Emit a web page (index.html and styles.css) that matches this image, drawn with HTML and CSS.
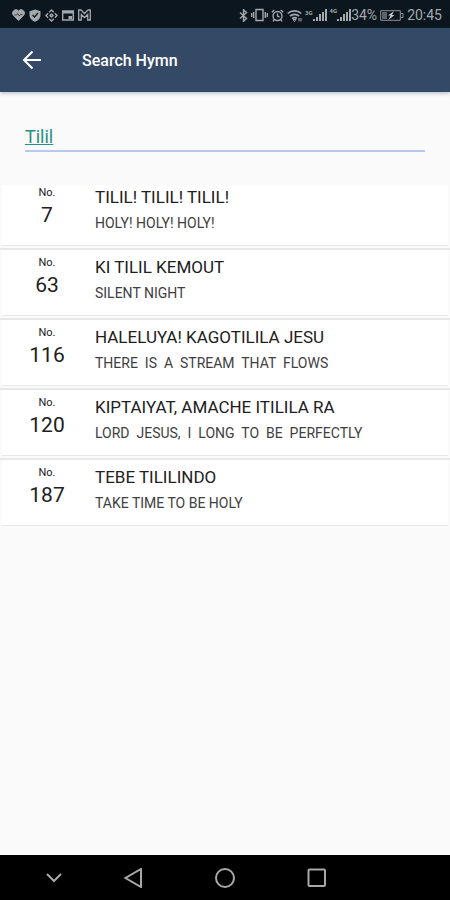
FILE: index.html
```html
<!DOCTYPE html>
<html lang="en">
  <head>
    <meta charset="UTF-8" />
    <meta name="viewport" content="width=device-width, initial-scale=1.0" />
    <title>Search Hymn</title>
    <link rel="stylesheet" href="styles.css">
  </head>
  <body>
    <!-- Status bar -->
    <div class="statusBar">
      <div class="statusGroup notifications">
        <svg width="13" height="12" viewBox="0 0 13 12">
          <path d="M6.500 11.500 1.300 6.200A3.200 3.200 0 0 1 6.500 2a3.200 3.200 0 0 1 5.200 4.200z" fill="#a3a9ad" stroke="#a3a9ad" />
          <path d="M2.500 6h2l1.200-1.500 1.600 2.500L8.500 5.500h2" fill="none" stroke="#3c464d" />
        </svg>
        <svg width="12" height="13" viewBox="0 0 12 13">
          <path d="M6 .5 11.500 2.200V6c0 3.500-2.500 5.500-5.500 6.700C3 11.500.5 9.500.5 6V2.200z" fill="#a3a9ad" />
          <path d="m3.500 6 2 2 3.500-4" fill="none" stroke="#0b161e" stroke-width="1.200" />
        </svg>
        <svg width="13" height="13" viewBox="0 0 13 13" fill="none" stroke="#a3a9ad" stroke-width="1.400">
          <path d="M4.200 3.200 6.500 1l2.300 2.200M9.800 4.200 12 6.500 9.800 8.800M8.800 9.800 6.500 12 4.200 9.800M3.200 8.800 1 6.500l2.200-2.300" />
          <path d="m6.500 5 1.500 1.500L6.500 8 5 6.500z" />
        </svg>
        <svg width="12" height="11" viewBox="0 0 12 11">
          <path d="M.7 1h10.600v9H.7z" fill="none" stroke="#a3a9ad" stroke-width="1.400" />
          <path d="M1 1h10v2.500H1zM6.500 6H10v3H6.500z" fill="#a3a9ad" />
        </svg>
        <svg width="13" height="12" viewBox="0 0 13 12" fill="none" stroke="#a3a9ad" stroke-width="1.300">
          <path d="M.7 1v10h2.600V5.500l3.200 3 3.200-3V11h2.600V1H10L6.500 4.500 3 1z" />
        </svg>
      </div>
      <div class="statusGroup system">
        <svg width="9" height="13" viewBox="0 0 9 13" fill="none" stroke="#a3a9ad" stroke-width="1.400">
          <path d="m1 3.500 6.500 6-3 2.800V.8l3 2.700-6.500 6" />
        </svg>
        <svg width="17" height="14" viewBox="0 0 17 14" fill="none" stroke="#a3a9ad" stroke-width="1.400">
          <path d="M5 1.500h7v11H5zM2.700 4v6M14.300 4v6M.7 5v4M16.300 5v4" />
        </svg>
        <svg width="13" height="13" viewBox="0 0 13 13" fill="none" stroke="#a3a9ad" stroke-width="1.400">
          <circle cx="6.500" cy="7" r="4.500" />
          <path d="M6.500 4.500V7l2 1.200M.8 3.200 3.300 1M12.200 3.200 9.700 1M3.300 10.500 2 12.300M9.700 10.500l1.300 1.800" />
        </svg>
        <svg width="15" height="13" viewBox="0 0 15 13" fill="none" stroke="#a3a9ad" stroke-width="1.700">
          <path d="M.7 4.500a10 10 0 0 1 13.600 0M3 7.200a6.500 6.500 0 0 1 9 0M5.200 9.600a3.200 3.200 0 0 1 4.600 0" />
          <path d="m7.500 12.500-1.500-2h3zM12 9v3.500M14 9v3.500" stroke-width="1" />
        </svg>
        <span class="signal">
          <span class="network">3G</span>
          <svg width="14" height="12" viewBox="0 0 14 12" fill="#a3a9ad">
            <path d="M0 10h2v2H0zM3 8h2v4H3zM6 5h2v7H6zM9 3h2v9H9zM12 0h2v12h-2z" />
          </svg>
        </span>
        <span class="signal">
          <span class="network">4G</span>
          <svg width="14" height="12" viewBox="0 0 14 12" fill="#a3a9ad">
            <path d="M0 10h2v2H0zM3 8h2v4H3zM6 5h2v7H6zM9 3h2v9H9zM12 0h2v12h-2z" />
          </svg>
          <span>34%</span>
        </span>
        <svg width="24" height="11" viewBox="0 0 24 11">
          <path d="M.7.7h19.600v9.600H.7zM20.500 3.500h2.500v4h-2.500" fill="none" stroke="#8b9297" stroke-width="1" />
          <path d="M2 2h5v7H2z" fill="#59636a" />
          <path d="m14 1-6 4.500h2.500L8.500 10l6-5H12z" fill="#c5c9cb" />
        </svg>
        <span>20:45</span>
      </div>
    </div>

    <!-- App bar -->
    <header class="appBar">
      <button class="backButton" aria-label="Back">
        <svg width="20" height="20" viewBox="0 0 20 20" fill="none" stroke="#fff" stroke-width="2">
          <path d="M19 10H2M10.500 1.500 2 10l8.500 8.500" />
        </svg>
      </button>
      <h1 class="appTitle">Search Hymn</h1>
    </header>

    <main class="content">
      <input class="searchInput" type="text" value="Tilil" aria-label="Search hymn" spellcheck="false" />

      <!-- Results -->
      <div class="results">
        <ul class="hymnList">
          <li class="hymn">
            <div class="card">
              <div class="hymnNumber"><span class="label">No.</span><span class="number">7</span></div>
              <div class="hymnInfo">
                <div class="hymnTitle">TILIL! TILIL! TILIL!</div>
                <div class="hymnSubtitle">HOLY! HOLY! HOLY!</div>
              </div>
            </div>
          </li>
          <li class="hymn">
            <div class="card">
              <div class="hymnNumber"><span class="label">No.</span><span class="number">63</span></div>
              <div class="hymnInfo">
                <div class="hymnTitle">KI TILIL KEMOUT</div>
                <div class="hymnSubtitle">SILENT NIGHT</div>
              </div>
            </div>
          </li>
          <li class="hymn">
            <div class="card">
              <div class="hymnNumber"><span class="label">No.</span><span class="number">116</span></div>
              <div class="hymnInfo">
                <div class="hymnTitle">HALELUYA! KAGOTILILA JESU</div>
                <div class="hymnSubtitle">THERE  IS  A  STREAM  THAT  FLOWS</div>
              </div>
            </div>
          </li>
          <li class="hymn">
            <div class="card">
              <div class="hymnNumber"><span class="label">No.</span><span class="number">120</span></div>
              <div class="hymnInfo">
                <div class="hymnTitle">KIPTAIYAT, AMACHE ITILILA RA</div>
                <div class="hymnSubtitle">LORD  JESUS,  I  LONG  TO  BE  PERFECTLY</div>
              </div>
            </div>
          </li>
          <li class="hymn">
            <div class="card">
              <div class="hymnNumber"><span class="label">No.</span><span class="number">187</span></div>
              <div class="hymnInfo">
                <div class="hymnTitle">TEBE TILILINDO</div>
                <div class="hymnSubtitle">TAKE TIME TO BE HOLY</div>
              </div>
            </div>
          </li>
        </ul>
      </div>
    </main>

    <!-- Navigation bar -->
    <nav class="navBar">
      <button class="navButton hideButton" aria-label="Hide navigation">
        <svg width="16" height="10" viewBox="0 0 16 10"><path d="m1 1 7 7 7-7" /></svg>
      </button>
      <button class="navButton" aria-label="Back">
        <svg width="20" height="20" viewBox="0 0 20 20"><path d="M18 1v18L2.500 10z" /></svg>
      </button>
      <button class="navButton" aria-label="Home">
        <svg width="20" height="20" viewBox="0 0 20 20"><circle cx="10" cy="10" r="9" /></svg>
      </button>
      <button class="navButton" aria-label="Recent apps">
        <svg width="20" height="20" viewBox="0 0 20 20"><rect x="1.500" y="1.500" width="16.500" height="16.500" rx="1" /></svg>
      </button>
    </nav>
  </body>
</html>
```

FILE: styles.css
```css
* {
  box-sizing: border-box;
}

body {
  margin: 0;
  min-height: 100vh;
  display: flex;
  flex-direction: column;
  background: #fafafa;
  color: #202020;
  font-family: Roboto, Arial, sans-serif;
}

button {
  padding: 0;
  border: none;
  background: none;
  cursor: pointer;
}

svg {
  display: block;
  flex-shrink: 0;
}

.statusBar {
  display: flex;
  justify-content: space-between;
  align-items: center;
  height: 28px;
  padding: 2px 8px 0 12px;
  background: #0b161e;
  color: #a3a9ad;
  font-size: 14px;
}

.statusGroup {
  display: flex;
  align-items: center;
  gap: 4px;
}

.system {
  gap: 3px;
}

.signal {
  display: flex;
  align-items: center;
}

.network {
  align-self: flex-start;
  font-size: 6px;
  line-height: 8px;
  font-weight: bold;
}

.appBar {
  display: flex;
  align-items: center;
  height: 64px;
  padding: 0 22px;
  gap: 40px;
  background: #344966;
  box-shadow: 0 1px 4px rgba(40, 80, 90, 0.4);
}

.appTitle {
  margin: 0;
  color: #fff;
  font-size: 16px;
  font-weight: 500;
}

.content {
  flex: 1;
  padding-top: 32px;
}

.searchInput {
  display: block;
  width: calc(100% - 50px);
  height: 28px;
  margin: 0 25px 33px;
  padding: 0 0 2px;
  border: none;
  border-bottom: 2px solid #b9c8e8;
  outline: none;
  background: none;
  color: #26917f;
  font-family: inherit;
  font-size: 18px;
  text-decoration: underline;
}

/* list is scrolled a little, top card is cut off */
.results {
  overflow: hidden;
}

.hymnList {
  margin: -5px 0 0;
  padding: 0;
  list-style: none;
}

.hymn {
  padding: 0 2px 2px;
  border-bottom: 2px solid #e8e8e8;
}

.hymn:last-child {
  border-bottom: none;
}

.card {
  display: flex;
  height: 66px;
  background: #fff;
  border-bottom: 1px solid #e8e8e8;
}

.hymnNumber {
  display: flex;
  flex-direction: column;
  align-items: center;
  width: 90px;
  padding-top: 6px;
}

.label {
  font-size: 11px;
  line-height: 14px;
}

.number {
  font-size: 21px;
  line-height: 30px;
}

.hymnInfo {
  flex: 1;
  padding: 7px 0 0 3px;
}

.hymnTitle {
  font-size: 17px;
  line-height: 20px;
}

.hymnSubtitle {
  padding-top: 6px;
  color: #404040;
  font-size: 14px;
  line-height: 20px;
  white-space: pre;
}

.navBar {
  display: grid;
  grid-template-columns: 1fr 92px 92px 92px 1fr;
  height: 46px;
  background: #000;
  border-top: 1px solid #fff;
}

.navButton {
  display: flex;
  justify-content: center;
  align-items: center;
}

.hideButton {
  padding-left: 20px;
}

.navButton svg {
  fill: none;
  stroke: #a8a8a8;
  stroke-width: 2;
}
```
